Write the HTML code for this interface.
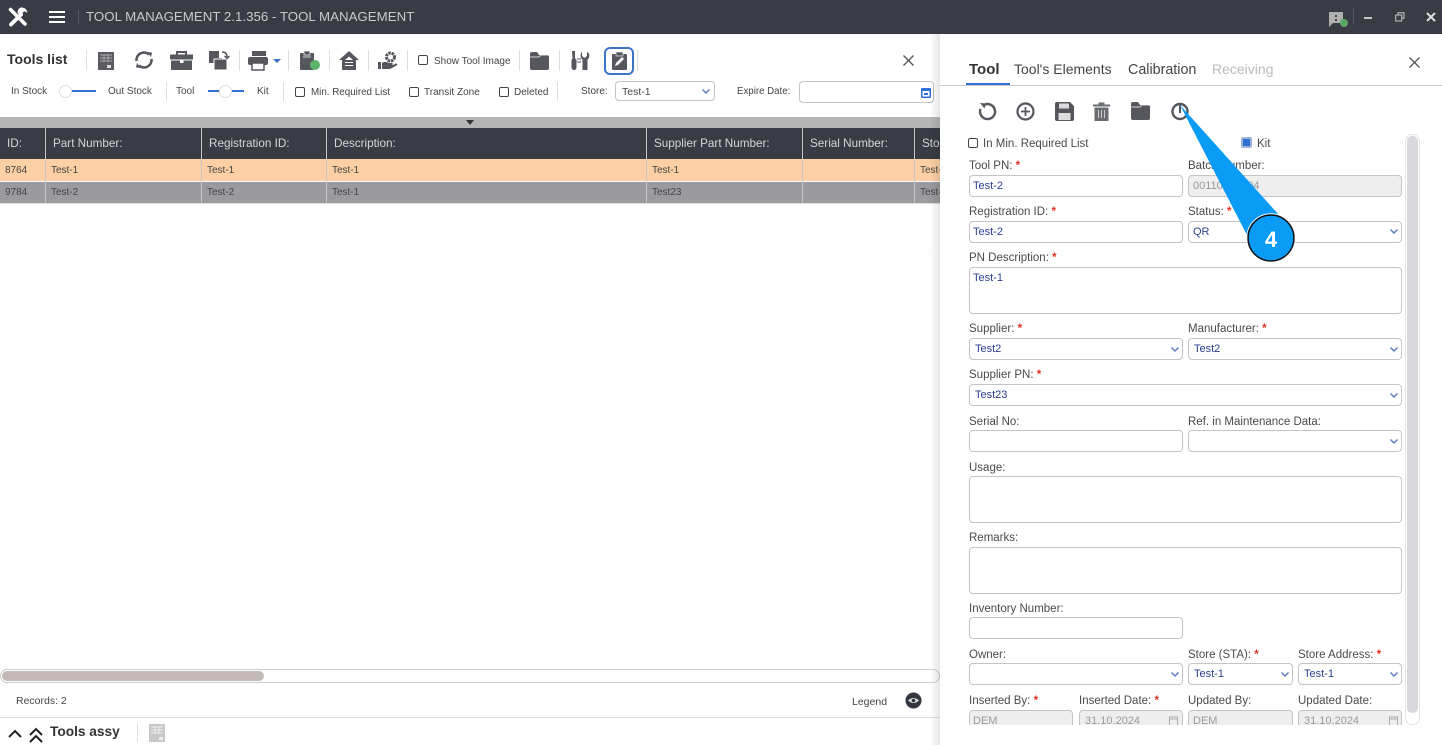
<!DOCTYPE html>
<html><head><meta charset="utf-8"><style>
*{box-sizing:border-box}
html,body{margin:0;padding:0;width:1442px;height:745px;overflow:hidden;background:#fff;font-family:"Liberation Sans",sans-serif;color:#444}
.t{position:absolute;white-space:nowrap;line-height:14px;transform:translateY(1px)}
.b{position:absolute}
.s10{font-size:10px;color:#444}
.l{font-size:11.5px;color:#4a4a4a}
.h{font-size:11.7px;color:#d6d7da}
.c{font-size:10px;color:#444}
.i{position:absolute;border:1px solid #c4c4c6;border-radius:4px;background:#fff;height:22px}
.d{background:#eee}
.v{font-size:11px;color:#2b3f8f;position:absolute;transform:none}
.g{font-size:11px;color:#999;position:absolute;transform:none}
.r{color:#e0301e;font-weight:bold}
.cb{position:absolute;width:10px;height:10px;border:1.4px solid #444;border-radius:2px;background:#fff}
.sep{position:absolute;width:1px;background:#ddd}
svg{position:absolute;overflow:visible}
.cv{fill:none;stroke:#5578c0;stroke-width:1.4}
</style></head><body>
<!-- title bar -->
<div class="b" style="left:0;top:0;width:1442px;height:34px;background:#393c45"></div>
<svg style="left:8px;top:7px" width="20" height="20" viewBox="0 0 20 20"><path d="M2.500 2.500L17 17" stroke="#fff" stroke-width="3.600" stroke-linecap="round"/><path d="M3 17.500L13 7.500" stroke="#fff" stroke-width="3.800" stroke-linecap="round"/><path d="M14.500 .8a4.700 4.700 0 0 1 4.700 5l-2.700-1.500-2 1.500.5 2.700a4.800 4.800 0 0 1-5.500-3.500 4.800 4.800 0 0 1 5-4.700z" fill="#fff"/></svg>
<div class="b" style="left:49px;top:11px;width:16px;height:2px;background:#fff"></div>
<div class="b" style="left:49px;top:16px;width:16px;height:2px;background:#fff"></div>
<div class="b" style="left:49px;top:21px;width:16px;height:2px;background:#fff"></div>
<div class="b" style="left:78px;top:10px;width:1px;height:14px;background:#555861"></div>
<div class="t" style="left:86px;top:9px;font-size:13.300px;color:#c9cacd">TOOL MANAGEMENT 2.1.356 - TOOL MANAGEMENT</div>
<svg style="left:1329px;top:11px" width="24" height="17" viewBox="0 0 24 17"><path d="M0 1h14v11H4l-4 4z" fill="#b0b0b0"/><rect x="6" y="4" width="2" height="2" fill="#444"/><rect x="6" y="8" width="2" height="2" fill="#444"/><circle cx="15" cy="12" r="4" fill="#5aa860"/></svg>
<div class="b" style="left:1353px;top:8px;width:1px;height:16px;background:#555861"></div>
<div class="b" style="left:1364px;top:17px;width:8px;height:2px;background:#c8c8c8"></div>
<svg style="left:1395px;top:12px" width="10" height="10" viewBox="0 0 10 10"><path d="M3 2.500V.7h6v5.500H7M.7 3h6v6h-6z" fill="none" stroke="#c8c8c8"/></svg>
<svg style="left:1426px;top:12px" width="10" height="10" viewBox="0 0 10 10"><path d="M1 1l8 8M9 1l-8 8" stroke="#ddd" stroke-width="2"/></svg>

<!-- left toolbar -->
<div class="t" style="left:7px;top:51px;font-size:14px;font-weight:bold;color:#333">Tools list</div>
<div class="sep" style="left:86px;top:50px;height:21px"></div>
<svg style="left:98px;top:52px" width="16" height="18" viewBox="0 0 16 18"><rect width="16" height="18" fill="#5a5c62"/><path d="M2 3h12M2 6h12M2 9h12M6 2v8M10 2v8" stroke="#aaa" stroke-width="1"/><rect x="9" y="13" width="4" height="3" fill="#ddd"/></svg>
<svg style="left:134px;top:50px" width="20" height="20" viewBox="0 0 20 20"><path d="M2.500 11A7.500 7.500 0 0 1 15 4.500M17.500 9A7.500 7.500 0 0 1 5 15.500" fill="none" stroke="#55575d" stroke-width="2.600"/><path d="M13 2l5 .5-1 4.500zM7 18l-5-.5 1-4.500z" fill="#55575d"/></svg>
<svg style="left:170px;top:51px" width="23" height="19" viewBox="0 0 23 19"><path d="M7 4V1h9v3" fill="none" stroke="#55575d" stroke-width="2"/><rect y="3.500" width="23" height="5" fill="#55575d"/><rect x="1" y="9.500" width="21" height="9.500" fill="#55575d"/><rect x="10" y="9" width="3.500" height="3" fill="#fff"/></svg>
<svg style="left:209px;top:51px" width="21" height="19" viewBox="0 0 21 19"><path d="M0 0h10v7h3v5H0z" fill="#55575d"/><rect x="5" y="8" width="13" height="11" fill="#55575d" stroke="#fff"/><path d="M13 1c3 0 5 1.500 5 5M15.500 5l2.500 2.500L20.500 5" fill="none" stroke="#55575d" stroke-width="1.500"/></svg>
<div class="sep" style="left:239px;top:50px;height:21px"></div>
<svg style="left:248px;top:51px" width="22" height="19" viewBox="0 0 22 19"><rect x="4" y="0" width="14" height="5" fill="#55575d"/><rect y="6" width="20" height="8" rx="2" fill="#55575d"/><rect x="4" y="12" width="12" height="7" fill="#fff" stroke="#55575d" stroke-width="1.500"/></svg>
<svg style="left:273px;top:59px" width="8" height="4" viewBox="0 0 8 4"><path d="M0 0h8L4 4z" fill="#3b73c4"/></svg>
<div class="sep" style="left:288px;top:50px;height:21px"></div>
<svg style="left:300px;top:51px" width="22" height="20" viewBox="0 0 22 20"><rect y="2" width="14" height="17" rx="1" fill="#55575d"/><rect x="4" y="0" width="6" height="4" fill="#55575d" stroke="#fff" stroke-width=".7"/><path d="M3 6h8" stroke="#ccc"/><circle cx="15" cy="14" r="5" fill="#5cb36c"/></svg>
<div class="sep" style="left:329px;top:50px;height:21px"></div>
<svg style="left:339px;top:51px" width="20" height="19" viewBox="0 0 20 19"><path d="M10 0l10 9h-3v10H3V9H0z" fill="#55575d"/><path d="M6 9l4-3.500L14 9z" fill="#fff"/><path d="M6 11.500h8M6 14.500h8" stroke="#fff"/></svg>
<div class="sep" style="left:368px;top:50px;height:21px"></div>
<svg style="left:378px;top:51px" width="20" height="19" viewBox="0 0 20 19"><circle cx="12.500" cy="6" r="4" fill="none" stroke="#55575d" stroke-width="3" stroke-dasharray="2.500 .8"/><path d="M0 11h3v7H0zM4 12c3-2 5-1 7 0h3c1 0 1 2 0 2h-4 5l3-1.500c1.500 0 1.500 1.500.5 2L12 18H4z" fill="#55575d"/></svg>
<div class="sep" style="left:407px;top:50px;height:21px"></div>
<div class="cb" style="left:418px;top:55px"></div>
<div class="t s10" style="left:434px;top:54px">Show Tool Image</div>
<div class="sep" style="left:519px;top:50px;height:21px"></div>
<svg style="left:530px;top:51px" width="19" height="19" viewBox="0 0 19 19"><path d="M0 3q0-2 2-2h5l2 3h8q2 0 2 2v11q0 2-2 2H2q-2 0-2-2z" fill="#55575d"/><path d="M0 6h9l2-2h8" stroke="#fff" fill="none" stroke-width=".7"/></svg>
<div class="sep" style="left:559px;top:50px;height:21px"></div>
<svg style="left:570px;top:51px" width="20" height="19" viewBox="0 0 20 19"><path d="M2 0h3v7l1.500 2v8l-1.500 2H3l-1.500-2V9L2.500 7zM12 1v4l2.500 2L17 5V1c3 1 3 6 .5 7.500V19h-5V8.500C10 7 10 2 12 1z" fill="#55575d"/><path d="M7 8h4M7 11h4" stroke="#55575d"/></svg>
<div class="b" style="left:604px;top:47px;width:30px;height:28px;border:2px solid #3d74c6;border-radius:6px"></div>
<svg style="left:612px;top:52px" width="15" height="18" viewBox="0 0 15 18"><rect y="2" width="15" height="16" rx="1" fill="#55575d"/><rect x="4" y="0" width="7" height="4" fill="#55575d" stroke="#fff" stroke-width=".6"/><path d="M3 14l1-3 6-6 2 2-6 6z" fill="#fff"/></svg>
<div class="sep" style="left:637px;top:50px;height:21px"></div>
<svg style="left:903px;top:55px" width="11" height="11" viewBox="0 0 11 11"><path d="M.5.500l10 10M10.500.500l-10 10" stroke="#555" stroke-width="1.300"/></svg>

<!-- filters -->
<div class="t s10" style="left:11px;top:84px">In Stock</div>
<div class="b" style="left:66px;top:90px;width:30px;height:2px;background:#2f6fd6"></div>
<div class="b" style="left:59px;top:85px;width:13px;height:13px;border-radius:50%;background:#fff;border:1px solid #ddd"></div>
<div class="t s10" style="left:108px;top:84px">Out Stock</div>
<div class="sep" style="left:166px;top:82px;height:19px"></div>
<div class="t s10" style="left:176px;top:84px">Tool</div>
<div class="b" style="left:208px;top:90px;width:36px;height:2px;background:#2f6fd6"></div>
<div class="b" style="left:219px;top:85px;width:13px;height:13px;border-radius:50%;background:#fff;border:1px solid #ddd"></div>
<div class="t s10" style="left:257px;top:84px">Kit</div>
<div class="sep" style="left:283px;top:82px;height:19px"></div>
<div class="cb" style="left:295px;top:87px"></div>
<div class="t s10" style="left:311px;top:85px;font-size:9.800px">Min. Required List</div>
<div class="cb" style="left:409px;top:87px"></div>
<div class="t s10" style="left:424px;top:85px">Transit Zone</div>
<div class="cb" style="left:499px;top:87px"></div>
<div class="t s10" style="left:514px;top:85px">Deleted</div>
<div class="sep" style="left:557px;top:82px;height:19px"></div>
<div class="t s10" style="left:581px;top:84px">Store:</div>
<div class="i" style="left:615px;top:81px;width:100px;height:20px"></div>
<div class="t s10" style="left:622px;top:84px;font-size:10.500px">Test-1</div>
<svg style="left:702px;top:89px" width="8" height="5" viewBox="0 0 8 5"><path class="cv" d="M.5.500L4 4 7.500.500"/></svg>
<div class="t s10" style="left:737px;top:84px;font-size:9.700px">Expire Date:</div>
<div class="i" style="left:799px;top:81px;width:135px;height:22px"></div>
<svg style="left:921px;top:87px" width="10" height="11" viewBox="0 0 10 11"><rect y="1" width="10" height="10" rx="1" fill="#2f6fd6"/><rect x="1.500" y="4" width="7" height="5.500" fill="#fff"/><rect x="3" y="6" width="4" height="2" fill="#2f6fd6"/></svg>

<!-- table -->
<div class="b" style="left:0;top:117px;width:940px;height:11px;background:#b5b5b5"></div>
<svg style="left:466px;top:120px" width="8" height="5" viewBox="0 0 8 5"><path d="M0 0h8L4 5z" fill="#333"/></svg>
<div class="b" style="left:0;top:128px;width:940px;height:31px;background:#393c45"></div>
<div class="b" style="left:0;top:159px;width:940px;height:22px;background:#fdcfa4"></div>
<div class="b" style="left:0;top:182px;width:940px;height:21px;background:#9b9a9e"></div>
<div class="b" style="left:0;top:203px;width:940px;height:1px;background:#ddd"></div>
<div class="b" style="left:45px;top:128px;width:1px;height:75px;background:#c6c6c8"></div>
<div class="b" style="left:201px;top:128px;width:1px;height:75px;background:#c6c6c8"></div>
<div class="b" style="left:326px;top:128px;width:1px;height:75px;background:#c6c6c8"></div>
<div class="b" style="left:646px;top:128px;width:1px;height:75px;background:#c6c6c8"></div>
<div class="b" style="left:802px;top:128px;width:1px;height:75px;background:#c6c6c8"></div>
<div class="b" style="left:914px;top:128px;width:1px;height:75px;background:#c6c6c8"></div>
<div class="t h" style="left:7px;top:136px">ID:</div>
<div class="t h" style="left:53px;top:136px">Part Number:</div>
<div class="t h" style="left:209px;top:136px">Registration ID:</div>
<div class="t h" style="left:334px;top:136px">Description:</div>
<div class="t h" style="left:654px;top:136px">Supplier Part Number:</div>
<div class="t h" style="left:810px;top:136px">Serial Number:</div>
<div class="t h" style="left:922px;top:136px">Sto</div>
<div class="t c" style="left:5px;top:163px">8764</div>
<div class="t c" style="left:51px;top:163px">Test-1</div>
<div class="t c" style="left:207px;top:163px">Test-1</div>
<div class="t c" style="left:332px;top:163px">Test-1</div>
<div class="t c" style="left:652px;top:163px">Test-1</div>
<div class="t c" style="left:920px;top:163px">Test-</div>
<div class="t c" style="left:5px;top:185px">9784</div>
<div class="t c" style="left:51px;top:185px">Test-2</div>
<div class="t c" style="left:207px;top:185px">Test-2</div>
<div class="t c" style="left:332px;top:185px">Test-1</div>
<div class="t c" style="left:652px;top:185px">Test23</div>
<div class="t c" style="left:920px;top:185px">Test-</div>

<!-- bottom left -->
<div class="b" style="left:0;top:669px;width:940px;height:14px;border:1px solid #ccc;border-radius:7px"></div>
<div class="b" style="left:2px;top:671px;width:262px;height:10px;background:#c4b9b9;border-radius:5px"></div>
<div class="t s10" style="left:16px;top:693px;font-size:10.500px">Records: 2</div>
<div class="t s10" style="left:852px;top:694px;font-size:10.500px">Legend</div>
<svg style="left:905px;top:692px" width="17" height="17" viewBox="0 0 17 17"><circle cx="8.500" cy="8.500" r="8" fill="#33363e"/><path d="M3 8.500q5.500-5 11 0-5.500 5-11 0z" fill="#ddd"/><circle cx="8.500" cy="8.500" r="1.800" fill="#33363e"/></svg>
<div class="b" style="left:0;top:717px;width:940px;height:1px;background:#ddd"></div>
<svg style="left:8px;top:729px" width="14" height="9" viewBox="0 0 14 9"><path d="M1 8l6-6 6 6" fill="none" stroke="#222" stroke-width="2"/></svg>
<svg style="left:29px;top:727px" width="14" height="16" viewBox="0 0 14 16"><path d="M1 8l6-6 6 6M1 15l6-6 6 6" fill="none" stroke="#222" stroke-width="2"/></svg>
<div class="t" style="left:50px;top:724px;font-size:13.700px;font-weight:bold;color:#333">Tools assy</div>
<div class="sep" style="left:137px;top:723px;height:19px"></div>
<svg style="left:149px;top:724px" width="16" height="18" viewBox="0 0 16 18"><rect width="16" height="18" fill="#c8c8c8"/><path d="M2 3h12M2 6h12M2 9h12M6 2v8M10 2v8" stroke="#eee" stroke-width="1"/><rect x="10" y="13" width="4" height="3" fill="#eee"/></svg>

<!-- right panel -->
<div class="b" style="left:930px;top:34px;width:10px;height:711px;background:linear-gradient(90deg,rgba(0,0,0,0),rgba(0,0,0,.10))"></div>
<div class="b" style="left:940px;top:34px;width:502px;height:711px;background:#fff"></div>
<div class="t" style="left:969px;top:62px;font-size:15px;font-weight:bold;color:#333">Tool</div>
<div class="t" style="left:1014px;top:61px;font-size:14px;color:#444">Tool's Elements</div>
<div class="t" style="left:1128px;top:62px;font-size:14.300px;color:#444">Calibration</div>
<div class="t" style="left:1212px;top:61px;font-size:14px;color:#bbb">Receiving</div>
<div class="b" style="left:940px;top:85px;width:502px;height:1px;background:#c8c8c8"></div>
<div class="b" style="left:966px;top:83px;width:44px;height:2px;background:#2f6fd6"></div>
<svg style="left:1409px;top:57px" width="11" height="11" viewBox="0 0 11 11"><path d="M.5.500l10 10M10.500.500l-10 10" stroke="#555" stroke-width="1.300"/></svg>

<svg style="left:978px;top:102px" width="19" height="19" viewBox="0 0 19 19"><path d="M7 2.500A7.500 7.500 0 1 1 2.500 7" fill="none" stroke="#55575d" stroke-width="2.400"/><path d="M2 1l6 .5-1.500 5z" fill="#55575d"/></svg>
<svg style="left:1016px;top:102px" width="19" height="19" viewBox="0 0 19 19"><circle cx="9.500" cy="9.500" r="8" fill="none" stroke="#55575d" stroke-width="2.200"/><path d="M5 9.500h9M9.500 5v9" stroke="#55575d" stroke-width="1.800"/></svg>
<svg style="left:1055px;top:102px" width="19" height="19" viewBox="0 0 19 19"><path d="M0 2q0-2 2-2h13l4 4v13q0 2-2 2H2q-2 0-2-2z" fill="#55575d"/><rect x="4" y="1.500" width="10" height="5" fill="#ddd"/><rect x="3.500" y="11" width="12" height="7" fill="#ddd"/></svg>
<svg style="left:1093px;top:102px" width="17" height="19" viewBox="0 0 17 19"><path d="M0 2.500h5.500V.5h6v2H17v2H0zM1.500 5.500h14V19h-14z" fill="#6b6c72"/><path d="M5.500 8v8M8.500 8v8M11.500 8v8" stroke="#ccc"/></svg>
<svg style="left:1131px;top:102px" width="19" height="18" viewBox="0 0 19 18"><path d="M0 2q0-2 2-2h5l2 3h8q2 0 2 2v11q0 2-2 2H2q-2 0-2-2z" fill="#55575d"/><path d="M0 5h9l2-2h8" stroke="#fff" fill="none" stroke-width=".7"/></svg>
<svg style="left:1171px;top:102px" width="18" height="19" viewBox="0 0 18 19"><circle cx="9" cy="9.500" r="7.500" fill="none" stroke="#55575d" stroke-width="2.400"/><path d="M9 3v8" stroke="#55575d" stroke-width="2"/></svg>

<div class="cb" style="left:968px;top:138px"></div>
<div class="t l" style="left:983px;top:136px">In Min. Required List</div>
<div class="b" style="left:1241px;top:137px;width:11px;height:11px;background:#2f6fd6;border:2px solid #9fb3d2;border-radius:2px"></div>
<div class="t l" style="left:1257px;top:136px">Kit</div>

<!-- form -->
<div class="t l" style="left:969px;top:158px">Tool PN: <span class="r">*</span></div>
<div class="t l" style="left:1188px;top:158px">Batch Number:</div>
<div class="i" style="left:969px;top:175px;width:214px"></div>
<div class="i d" style="left:1188px;top:175px;width:214px"></div>
<div class="t v" style="left:973px;top:179px">Test-2</div>
<div class="t g" style="left:1193px;top:179px">00110000004</div>

<div class="t l" style="left:969px;top:204px">Registration ID: <span class="r">*</span></div>
<div class="t l" style="left:1188px;top:204px">Status: <span class="r">*</span></div>
<div class="i" style="left:969px;top:221px;width:214px"></div>
<div class="i" style="left:1188px;top:221px;width:214px"></div>
<div class="t v" style="left:973px;top:225px">Test-2</div>
<div class="t v" style="left:1193px;top:225px">QR</div>
<svg style="left:1390px;top:229px" width="8" height="5" viewBox="0 0 8 5"><path class="cv" d="M.5.500L4 4 7.500.500"/></svg>

<div class="t l" style="left:969px;top:250px">PN Description: <span class="r">*</span></div>
<div class="i" style="left:969px;top:267px;width:433px;height:47px"></div>
<div class="t v" style="left:973px;top:271px">Test-1</div>

<div class="t l" style="left:969px;top:321px">Supplier: <span class="r">*</span></div>
<div class="t l" style="left:1188px;top:321px">Manufacturer: <span class="r">*</span></div>
<div class="i" style="left:969px;top:338px;width:214px"></div>
<div class="i" style="left:1188px;top:338px;width:214px"></div>
<div class="t v" style="left:975px;top:342px">Test2</div>
<div class="t v" style="left:1194px;top:342px">Test2</div>
<svg style="left:1171px;top:347px" width="8" height="5" viewBox="0 0 8 5"><path class="cv" d="M.5.500L4 4 7.500.500"/></svg>
<svg style="left:1390px;top:347px" width="8" height="5" viewBox="0 0 8 5"><path class="cv" d="M.5.500L4 4 7.500.500"/></svg>

<div class="t l" style="left:969px;top:367px">Supplier PN: <span class="r">*</span></div>
<div class="i" style="left:969px;top:384px;width:433px"></div>
<div class="t v" style="left:975px;top:388px">Test23</div>
<svg style="left:1390px;top:393px" width="8" height="5" viewBox="0 0 8 5"><path class="cv" d="M.5.500L4 4 7.500.500"/></svg>

<div class="t l" style="left:969px;top:414px">Serial No:</div>
<div class="t l" style="left:1188px;top:414px">Ref. in Maintenance Data:</div>
<div class="i" style="left:969px;top:430px;width:214px"></div>
<div class="i" style="left:1188px;top:430px;width:214px"></div>
<svg style="left:1390px;top:439px" width="8" height="5" viewBox="0 0 8 5"><path class="cv" d="M.5.500L4 4 7.500.500"/></svg>

<div class="t l" style="left:969px;top:460px">Usage:</div>
<div class="i" style="left:969px;top:476px;width:433px;height:47px"></div>
<div class="t l" style="left:969px;top:530px">Remarks:</div>
<div class="i" style="left:969px;top:547px;width:433px;height:47px"></div>
<div class="t l" style="left:969px;top:601px">Inventory Number:</div>
<div class="i" style="left:969px;top:617px;width:214px"></div>

<div class="t l" style="left:969px;top:647px">Owner:</div>
<div class="t l" style="left:1188px;top:647px">Store (STA): <span class="r">*</span></div>
<div class="t l" style="left:1298px;top:647px">Store Address: <span class="r">*</span></div>
<div class="i" style="left:969px;top:663px;width:214px"></div>
<div class="i" style="left:1188px;top:663px;width:105px"></div>
<div class="i" style="left:1298px;top:663px;width:104px"></div>
<div class="t v" style="left:1194px;top:667px">Test-1</div>
<div class="t v" style="left:1304px;top:667px">Test-1</div>
<svg style="left:1171px;top:672px" width="8" height="5" viewBox="0 0 8 5"><path class="cv" d="M.5.500L4 4 7.500.500"/></svg>
<svg style="left:1281px;top:672px" width="8" height="5" viewBox="0 0 8 5"><path class="cv" d="M.5.500L4 4 7.500.500"/></svg>
<svg style="left:1390px;top:672px" width="8" height="5" viewBox="0 0 8 5"><path class="cv" d="M.5.500L4 4 7.500.500"/></svg>

<div class="t l" style="left:969px;top:693px">Inserted By: <span class="r">*</span></div>
<div class="t l" style="left:1079px;top:693px">Inserted Date: <span class="r">*</span></div>
<div class="t l" style="left:1188px;top:693px">Updated By:</div>
<div class="t l" style="left:1298px;top:693px">Updated Date:</div>
<div class="b" style="left:940px;top:710px;width:465px;height:15px;overflow:hidden">
<div class="i d" style="left:29px;top:0;width:104px"></div>
<div class="i d" style="left:139px;top:0;width:104px"></div>
<div class="i d" style="left:248px;top:0;width:105px"></div>
<div class="i d" style="left:358px;top:0;width:104px"></div>
<div class="t g" style="left:33px;top:4px">DEM</div>
<div class="t g" style="left:145px;top:4px">31.10.2024</div>
<div class="t g" style="left:253px;top:4px">DEM</div>
<div class="t g" style="left:364px;top:4px">31.10.2024</div>
<svg style="left:229px;top:6px" width="9" height="10" viewBox="0 0 9 10"><rect x=".5" y="1" width="8" height="8.500" fill="none" stroke="#aaa"/><path d="M0 3h9" stroke="#aaa"/></svg>
<svg style="left:449px;top:6px" width="9" height="10" viewBox="0 0 9 10"><rect x=".5" y="1" width="8" height="8.500" fill="none" stroke="#aaa"/><path d="M0 3h9" stroke="#aaa"/></svg>
</div>

<!-- form scrollbar -->
<div class="b" style="left:1405px;top:134px;width:15px;height:591px;border:1px solid #e4e4e6;border-radius:7px"></div>
<div class="b" style="left:1407px;top:136px;width:11px;height:577px;background:#d9d9dc;border-radius:5px"></div>

<!-- callout -->
<svg style="left:0;top:0" width="1442" height="745" viewBox="0 0 1442 745"><polygon points="1180,105 1279,215 1249,239" fill="#0a9bf7"/><circle cx="1271" cy="238" r="23" fill="#0a9bf7" stroke="#111" stroke-width="1.500"/><circle cx="1271" cy="238" r="24.300" fill="none" stroke="#fff" stroke-width=".8"/><text x="1271" y="247" font-family="Liberation Sans" font-size="22" font-weight="bold" fill="#fff" text-anchor="middle">4</text></svg>
</body></html>
